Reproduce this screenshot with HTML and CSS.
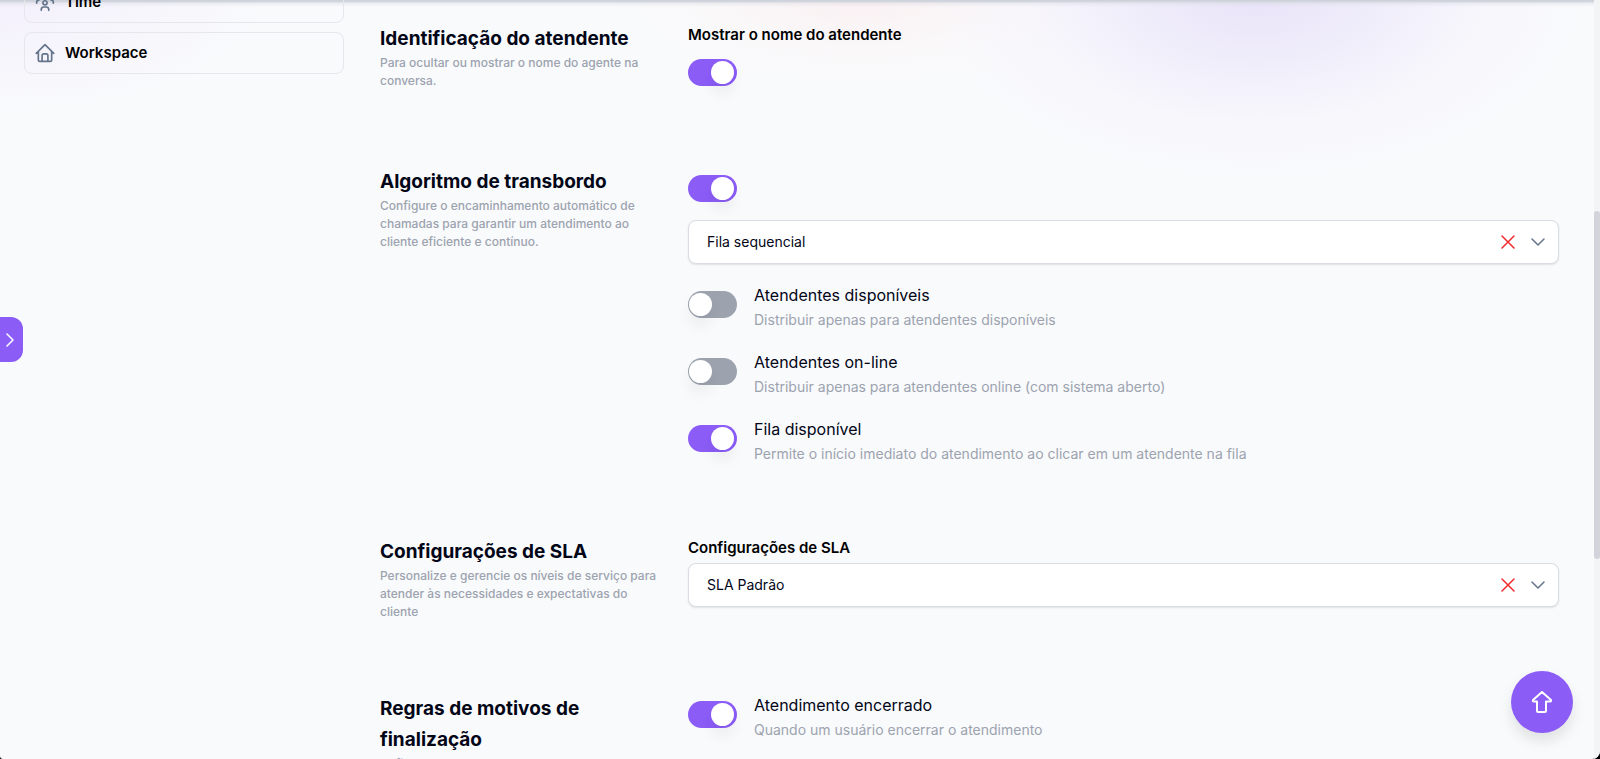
FILE: index.html
```html
<!DOCTYPE html>
<html lang="pt-BR">
<head>
  <meta charset="UTF-8">
  <title>Configurações</title>
  <meta name="viewport" content="width=device-width,initial-scale=1">
  <link rel="stylesheet" href="styles.css">
</head>
<body>
<div class="app">
  <aside class="sidebar">
    <a class="nav-item" href="#time">
      <svg class="nav-icon" viewBox="0 0 24 24"><circle cx="12" cy="13" r="2.5"/><path d="M7.500 22v-1a3 3 0 0 1 3-3h3a3 3 0 0 1 3 3v1M2 13.500v-1a3 3 0 0 1 3-3M22 13.500v-1a3 3 0 0 0-3-3"/><circle cx="5.500" cy="5" r="2"/><circle cx="18.500" cy="5" r="2"/></svg>
      Time
    </a>
    <a class="nav-item" href="#workspace">
      <svg class="nav-icon" viewBox="0 0 24 24"><path d="M1.500 12.500L12 2l10.500 10.500M4 10.500V20a2 2 0 0 0 2 2h12a2 2 0 0 0 2-2v-9.500M8.500 22v-7a2 2 0 0 1 2-2h3a2 2 0 0 1 2 2v7"/></svg>
      Workspace
    </a>
  </aside>

  <main class="content">
    <section class="section">
      <div class="intro">
        <h2>Identificação do atendente</h2>
        <p>Para ocultar ou mostrar o nome do agente na conversa.</p>
      </div>
      <div class="fields">
        <label class="label" for="show-name">Mostrar o nome do atendente</label>
        <div class="switch-line"><input class="switch" type="checkbox" id="show-name" checked></div>
      </div>
    </section>

    <section class="section">
      <div class="intro">
        <h2>Algoritmo de transbordo</h2>
        <p>Configure o encaminhamento automático de chamadas para garantir um atendimento ao cliente eficiente e contínuo.</p>
      </div>
      <div class="fields">
        <div class="switch-line"><input class="switch" type="checkbox" aria-label="Algoritmo de transbordo" checked></div>
        <div class="select-box spaced">
          <select aria-label="Fila"><option>Fila sequencial</option></select>
          <button class="clear" type="button" aria-label="Limpar"><svg viewBox="0 0 14 14"><path d="M1 1l12 12M13 1L1 13"/></svg></button>
          <svg class="chevron" viewBox="0 0 14 8"><path d="M1 1l6 6 6-6"/></svg>
        </div>
        <div class="options">
          <div class="option">
            <input class="switch" type="checkbox" id="available">
            <label for="available">Atendentes disponíveis<span>Distribuir apenas para atendentes disponíveis</span></label>
          </div>
          <div class="option">
            <input class="switch" type="checkbox" id="online">
            <label for="online">Atendentes on-line<span>Distribuir apenas para atendentes online (com sistema aberto)</span></label>
          </div>
          <div class="option">
            <input class="switch" type="checkbox" id="queue" checked>
            <label for="queue">Fila disponível<span>Permite o início imediato do atendimento ao clicar em um atendente na fila</span></label>
          </div>
        </div>
      </div>
    </section>

    <section class="section">
      <div class="intro">
        <h2>Configurações de SLA</h2>
        <p>Personalize e gerencie os níveis de serviço para atender às necessidades e expectativas do cliente</p>
      </div>
      <div class="fields">
        <label class="label" for="sla">Configurações de SLA</label>
        <div class="select-box">
          <select id="sla"><option>SLA Padrão</option></select>
          <button class="clear" type="button" aria-label="Limpar"><svg viewBox="0 0 14 14"><path d="M1 1l12 12M13 1L1 13"/></svg></button>
          <svg class="chevron" viewBox="0 0 14 8"><path d="M1 1l6 6 6-6"/></svg>
        </div>
      </div>
    </section>

    <section class="section">
      <div class="intro">
        <h2>Regras de motivos de finalização</h2>
        <p>Defina as regras de encerramento do atendimento.</p>
      </div>
      <div class="fields">
        <div class="option">
          <input class="switch" type="checkbox" id="closed" checked>
          <label for="closed">Atendimento encerrado<span>Quando um usuário encerrar o atendimento</span></label>
        </div>
      </div>
    </section>
  </main>

  <button class="drawer-toggle" type="button" aria-label="Abrir menu"><svg viewBox="0 0 8 14"><path d="M1 1l6 6-6 6"/></svg></button>
  <button class="to-top" type="button" aria-label="Voltar ao topo"><svg viewBox="0 0 20 22"><path d="M10 1L1 9q-.5 1.500 1 1.500h3V20q0 1 1 1h7q1 0 1-1v-9.500h4q1.500 0 1-1.500z"/></svg></button>
  <div class="scroll-track"><div class="scroll-thumb"></div></div>
</div>
</body>
</html>
```
FILE: styles.css
```css
* {
  box-sizing: border-box;
}
body {
  margin: 0;
  background: #000;
  color: #020617;
  font-family: Inter, "Liberation Sans", sans-serif;
  font-size: 14px;
  line-height: 24px;
}
.app {
  position: relative;
  display: flex;
  gap: 36px;
  height: 100vh;
  padding: 0 41px 0 24px;
  overflow: hidden;
  border-radius: 0 0 8px 3px;
  background:
    linear-gradient(#cbcfd8 0, #d5d8e0 2px, #d5d8e066 3px, #d5d8e000 7px),
    radial-gradient(ellipse 330px 190px at 1256px -10px, #dfd6f6aa, #e9e3fa88 40%, #f5f2fc66 70%, #f9fafc00),
    radial-gradient(ellipse 250px 100px at 860px -10px, #fbeaecaa, #fbf5f566 60%, #f9fafc00),
    radial-gradient(ellipse 260px 110px at 0 0, #f1ebfcaa, #f9fafc00),
    #f9fafc;
}
svg {
  fill: none;
  stroke: currentColor;
  stroke-linecap: round;
  stroke-linejoin: round;
}

/* sidebar */
.sidebar {
  display: flex;
  flex: 0 0 320px;
  flex-direction: column;
  gap: 9px;
  margin-top: -19px;
}
.nav-item {
  display: flex;
  align-items: center;
  gap: 10px;
  height: 42px;
  padding: 0 10px;
  border: 1px solid #e5e7eb;
  border-radius: 8px;
  color: #000;
  font-size: 15px;
  font-weight: 600;
  text-decoration: none;
}
.nav-icon {
  width: 20px;
  height: 20px;
  color: #64748b;
  stroke-width: 2;
}

/* settings */
.content {
  display: flex;
  flex: 1;
  flex-direction: column;
  gap: 70px;
  padding-top: 23px;
}
.section {
  display: grid;
  grid-template-columns: 280px 1fr;
  gap: 28px;
}
.intro {
  padding-bottom: 2px;
}
.intro h2 {
  margin: 0;
  font-size: 19px;
  font-weight: 700;
  line-height: 31px;
}
.intro p {
  margin: 0;
  color: #9ca3af;
  font-size: 12px;
  font-weight: 500;
  line-height: 18px;
}
.label {
  display: block;
  margin-bottom: 3px;
  color: #000;
  font-size: 15px;
  font-weight: 600;
}
.switch-line {
  height: 46px;
  padding-top: 9px;
}
.switch {
  display: block;
  flex: none;
  width: 49px;
  height: 27px;
  margin: 0;
  padding: 2px 1px;
  appearance: none;
  border-radius: 14px;
  background: #9ca3af;
}
.switch::before {
  display: block;
  width: 23px;
  height: 23px;
  border-radius: 50%;
  background: #fff;
  box-shadow: 0 10px 15px #0000000f;
  content: "";
}
.switch:checked {
  padding-left: 23px;
  background: #8b5cf6;
}
.select-box {
  position: relative;
}
.spaced {
  margin: 8px 0 19px;
}
.select-box select {
  display: block;
  width: 100%;
  height: 44px;
  padding: 0 80px 0 18px;
  appearance: none;
  border: 1px solid #d9dce2;
  border-radius: 8px;
  background: #fff;
  box-shadow: 0 1px 2px #0000001a;
  color: inherit;
  font: inherit;
}
.clear {
  position: absolute;
  top: 12px;
  right: 41px;
  width: 20px;
  height: 20px;
  padding: 3px;
  border: 0;
  background: none;
  color: #ef2b2d;
}
.clear svg {
  display: block;
  stroke-width: 1.500;
}
.chevron {
  position: absolute;
  top: 18px;
  right: 14px;
  width: 14px;
  height: 8px;
  color: #64748b;
  stroke-width: 1.500;
  pointer-events: none;
}
.options {
  display: grid;
  gap: 18px;
}
.option {
  display: flex;
  gap: 17px;
  align-items: flex-start;
}
.option .switch {
  margin-top: 8px;
}
.option label {
  font-size: 16px;
}
.option span {
  display: block;
  margin-top: 1px;
  color: #9ca3af;
  font-size: 14px;
}

/* floating controls */
.drawer-toggle {
  position: absolute;
  top: 317px;
  left: 0;
  width: 23px;
  height: 45px;
  padding: 0 0 0 6px;
  border: 0;
  border-radius: 0 12px 12px 0;
  background: #8b5cf6;
  color: #fff;
}
.drawer-toggle svg {
  display: block;
  width: 8px;
  height: 14px;
  stroke-width: 1.500;
}
.to-top {
  position: absolute;
  right: 27px;
  bottom: 26px;
  display: grid;
  width: 62px;
  height: 62px;
  place-items: center;
  border: 0;
  border-radius: 50%;
  background: #8b5cf6;
  box-shadow: 0 8px 14px #0000001a;
  color: #fff;
}
.to-top svg {
  width: 20px;
  height: 22px;
  stroke-width: 2;
}
.scroll-track {
  position: absolute;
  top: 0;
  right: 0;
  bottom: 0;
  width: 6px;
  padding-top: 211px;
  background: #f3f4f6;
}
.scroll-thumb {
  height: 348px;
  border-radius: 3px;
  background: #d1d5db;
}
```
